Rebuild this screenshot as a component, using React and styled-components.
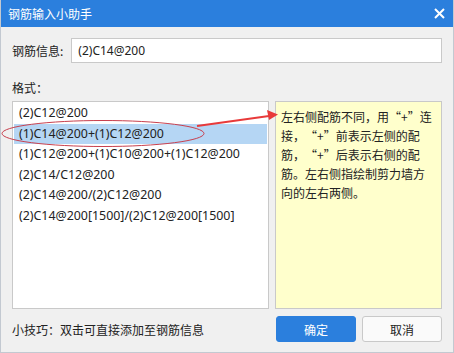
import React from "react";
import styled, { createGlobalStyle } from "styled-components";

const GlobalStyle = createGlobalStyle`
  html, body { margin: 0; padding: 0; }
  body { font-family: "Noto Sans", "Noto Sans CJK SC", sans-serif; }
`;

const formats = [
  "(2)C12@200",
  "(1)C14@200+(1)C12@200",
  "(1)C12@200+(1)C10@200+(1)C12@200",
  "(2)C14/C12@200",
  "(2)C14@200/(2)C12@200",
  "(2)C14@200[1500]/(2)C12@200[1500]",
];

const App = () => {
  return (
    <>
      <GlobalStyle />
      <Window lang="zh-CN">
        <TitleBar>
          <Title>钢筋输入小助手</Title>
          <Close>
            <svg width="11" height="11" viewBox="0 0 11 11">
              <path d="M1 1L10 10M10 1L1 10" stroke="#fff" strokeWidth="2" />
            </svg>
          </Close>
        </TitleBar>
        <Body>
          <InfoRow>
            <Label>钢筋信息:</Label>
            <Input type="text" defaultValue="(2)C14@200" />
          </InfoRow>
          <Label>格式：</Label>
          <Main>
            <List>
              {formats.map((f, i) => (
                <Item key={f} selected={i === 1}>{f}</Item>
              ))}
            </List>
            <Note>
              左右侧配筋不同，用“+”连接，“+”前表示左侧的配筋，“+”后表示右侧的配筋。左右侧指绘制剪力墙方向的左右两侧。
            </Note>
          </Main>
          <Footer>
            <Tip>小技巧：双击可直接添加至钢筋信息</Tip>
            <Button primary>确定</Button>
            <Button>取消</Button>
          </Footer>
        </Body>
        <Overlay width="454" height="353" viewBox="0 0 454 353">
          <ellipse cx="102" cy="133.5" rx="101" ry="13" fill="none" stroke="#c8404e" strokeWidth="1" />
          <path d="M196 126L268 116" stroke="#e83a3a" strokeWidth="2" />
          <path d="M277 114.5L266 110L268 120Z" fill="#e83a3a" />
        </Overlay>
      </Window>
    </>
  );
};

const Window = styled.div`
  position: relative;
  width: 454px;
  height: 353px;
  box-sizing: border-box;
  background: #f0f0f0;
  border: 1px solid #c3c9d1;
  border-top: none;
  display: flex;
  flex-direction: column;
  overflow: hidden;
`;

const TitleBar = styled.div`
  height: 27px;
  margin: 0 -1px;
  background: #2b7fdd;
  display: flex;
  align-items: center;
  justify-content: space-between;
  padding: 0 9px 0 8px;
`;

const Title = styled.div`
  color: #fff;
  font-size: 12px;
  font-family: "Noto Sans CJK SC", sans-serif;
`;

const Close = styled.div`
  display: flex;
  align-items: center;
`;

const Body = styled.div`
  flex: 1;
  padding: 11px 11px 0 11px;
  display: flex;
  flex-direction: column;
  font-size: 12px;
  color: #222;
`;

const InfoRow = styled.div`
  display: flex;
  align-items: center;
  gap: 8px;
  margin-bottom: 16px;
`;

const Label = styled.div`
  font-size: 12px;
  font-family: "Noto Sans CJK SC", sans-serif;
  color: #222;
`;

const Input = styled.input`
  flex: 1;
  height: 25px;
  box-sizing: border-box;
  border: 1px solid #c9c9c9;
  padding: 0 6px;
  font-family: "Noto Sans", "Noto Sans CJK SC", sans-serif;
  font-size: 12px;
  color: #222;
  outline: none;
`;

const Main = styled.div`
  display: flex;
  gap: 6px;
  height: 208px;
  margin-top: 5px;
`;

const List = styled.div`
  width: 257px;
  box-sizing: border-box;
  background: #fff;
  border: 1px solid #c9c9c9;
  padding: 1px 1px;
`;

const Item = styled.div`
  height: 20.6px;
  line-height: 20.6px;
  padding-left: 5px;
  font-size: 12.4px;
  white-space: nowrap;
  background: ${(p) => (p.selected ? "#b5d6f4" : "transparent")};
`;

const Note = styled.div`
  flex: 1;
  box-sizing: border-box;
  background: #ffffcc;
  border: 1px solid #c9c9c9;
  padding: 5px 6px 0 5px;
  font-family: "Noto Sans CJK SC", sans-serif;
  font-size: 12px;
  line-height: 19px;
  color: #222;
  line-break: strict;
  text-spacing-trim: space-all;
`;

const Footer = styled.div`
  display: flex;
  align-items: center;
  margin-top: 7px;
  gap: 6px;
`;

const Tip = styled.div`
  flex: 1;
  font-family: "Noto Sans CJK SC", sans-serif;
  font-size: 12px;
`;

const Button = styled.button`
  width: 80px;
  height: 26px;
  border-radius: 3px;
  font-family: "Noto Sans CJK SC", sans-serif;
  font-size: 12px;
  border: 1px solid ${(p) => (p.primary ? "#2b7fdd" : "#c9c9c9")};
  background: ${(p) => (p.primary ? "#2b7fdd" : "#fafafa")};
  color: ${(p) => (p.primary ? "#fff" : "#222")};
`;

const Overlay = styled.svg`
  position: absolute;
  left: 0;
  top: 0;
  pointer-events: none;
`;

export default App;
